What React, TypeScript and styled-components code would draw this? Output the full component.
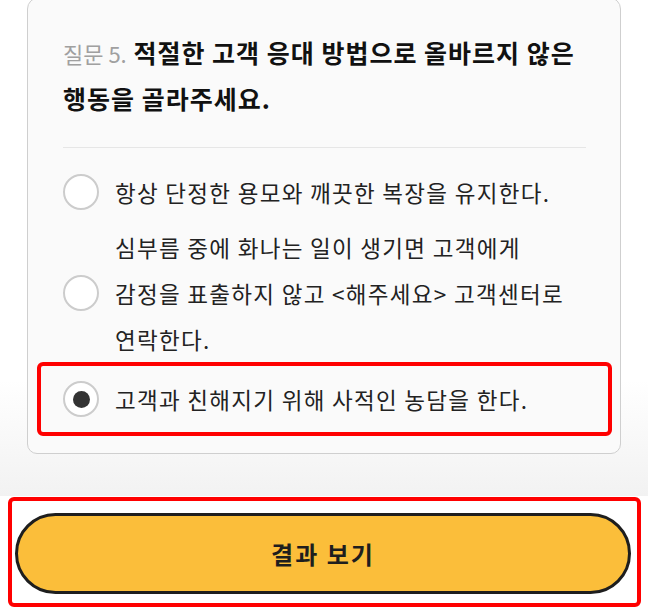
import styled, { createGlobalStyle } from 'styled-components';

const GlobalStyle = createGlobalStyle`
  html, body {
    margin: 0;
    padding: 0;
    background: #ffffff;
  }
  body {
    font-family: "Noto Sans CJK KR", "Noto Sans", sans-serif;
    color: #222;
  }
  * {
    box-sizing: border-box;
  }
`;

const Page = styled.div`
  height: 609px;
  display: flex;
  flex-direction: column;
  overflow: hidden;
`;

const ScrollArea = styled.div`
  flex: 1;
  padding: 0 27px;
  background: linear-gradient(to bottom, #ffffff 0, #ffffff 380px, #f2f2f2 100%);
`;

const Card = styled.section`
  margin-top: -3px;
  background: #fafafa;
  border: 1px solid #cfcfcf;
  border-radius: 12px 12px 10px 10px;
  padding: 32px 30px 17px 35px;
`;

const Question = styled.h2`
  margin: 0;
  font-size: 25px;
  line-height: 45px;
  font-weight: 700;
  color: #111;
  letter-spacing: 1px;
`;

const QuestionNo = styled.span`
  font-size: 22px;
  font-weight: 400;
  color: #a0a0a0;
  letter-spacing: 0;
`;

const Divider = styled.hr`
  margin: 26px 4px 0 0;
  border: none;
  border-top: 1px solid #e6e6e6;
`;

const OptionList = styled.div`
  display: flex;
  flex-direction: column;
  gap: 9px;
  padding-top: 21px;
`;

const Option = styled.label<{ $selected?: boolean }>`
  position: relative;
  display: flex;
  align-items: center;
  gap: 16px;
  font-size: 22.5px;
  line-height: 46px;
  letter-spacing: 1.3px;
  color: #222;
  cursor: pointer;
  ${({ $selected }) =>
    $selected &&
    `
    margin: -9px -22px 0 -26px;
    padding: 14px 26px;
  `}
`;

const Highlight = styled.span<{ $inset: string }>`
  position: absolute;
  inset: ${({ $inset }) => $inset};
  border: 4px solid #ff0000;
  border-radius: 6px;
  pointer-events: none;
`;

const Radio = styled.span<{ $checked?: boolean }>`
  flex: none;
  width: 36px;
  height: 36px;
  border-radius: 50%;
  border: 2px solid #cccccc;
  background: #ffffff;
  display: flex;
  align-items: center;
  justify-content: center;

  &::after {
    content: '';
    display: ${({ $checked }) => ($checked ? 'block' : 'none')};
    width: 17px;
    height: 17px;
    border-radius: 50%;
    background: #333333;
  }
`;

const OptionText = styled.span`
  flex: 1;
  white-space: nowrap;
`;

const BottomBar = styled.div`
  position: relative;
  flex: none;
  height: 113px;
  background: #ffffff;
  padding: 17px 17px 15px 15px;
`;

const ResultButton = styled.button`
  width: 100%;
  height: 81px;
  border: 3px solid #1e1e1e;
  border-radius: 41px;
  background: #fbbe3a;
  font-family: "Noto Sans CJK KR", "Noto Sans", sans-serif;
  font-size: 24px;
  font-weight: 700;
  letter-spacing: 2px;
  color: #1e1e1e;
  cursor: pointer;
`;

const options = [
  { text: '항상 단정한 용모와 깨끗한 복장을 유지한다.' },
  {
    text: (
      <>
        심부름 중에 화나는 일이 생기면 고객에게
        <br />
        감정을 표출하지 않고 &lt;해주세요&gt; 고객센터로
        <br />
        연락한다.
      </>
    ),
  },
  { text: '고객과 친해지기 위해 사적인 농담을 한다.', selected: true },
];

export default function App() {
  return (
    <>
      <GlobalStyle />
      <Page>
        <ScrollArea>
          <Card>
            <Question>
              <QuestionNo>질문 5.</QuestionNo> 적절한 고객 응대 방법으로 올바르지 않은
              <br />
              행동을 골라주세요.
            </Question>
            <Divider />
            <OptionList>
              {options.map((o, i) => (
                <Option key={i} $selected={o.selected}>
                  <Radio $checked={o.selected} />
                  <OptionText>{o.text}</OptionText>
                  {o.selected && <Highlight $inset="0" />}
                </Option>
              ))}
            </OptionList>
          </Card>
        </ScrollArea>
        <BottomBar>
          <ResultButton>결과 보기</ResultButton>
          <Highlight $inset="1px 7px 2px 8px" />
        </BottomBar>
      </Page>
    </>
  );
}
